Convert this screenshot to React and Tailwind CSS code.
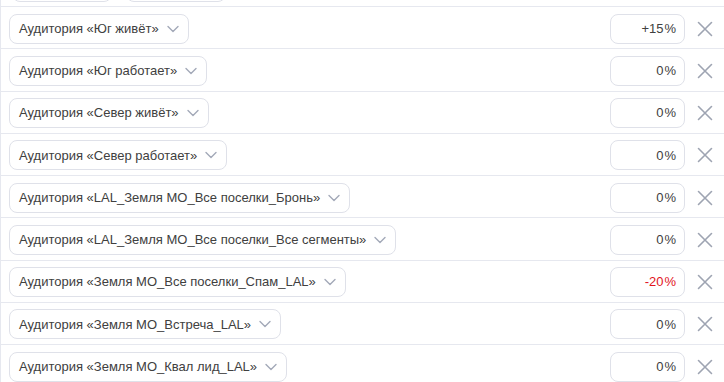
import React from 'react';

const ROWS = [
  { name: 'Аудитория «Юг живёт»', value: '+15' },
  { name: 'Аудитория «Юг работает»', value: '0' },
  { name: 'Аудитория «Север живёт»', value: '0' },
  { name: 'Аудитория «Север работает»', value: '0' },
  { name: 'Аудитория «LAL_Земля МО_Все поселки_Бронь»', value: '0' },
  { name: 'Аудитория «LAL_Земля МО_Все поселки_Все сегменты»', value: '0' },
  { name: 'Аудитория «Земля МО_Все поселки_Спам_LAL»', value: '-20', negative: true },
  { name: 'Аудитория «Земля МО_Встреча_LAL»', value: '0' },
  { name: 'Аудитория «Земля МО_Квал лид_LAL»', value: '0' },
];

function Chevron() {
  return (
    <svg width="14" height="14" viewBox="0 0 14 14" fill="none" className="shrink-0">
      <path d="M2 4.5 L7 9.5 L12 4.5" stroke="#a3a9b8" strokeWidth="1.4" strokeLinecap="round" strokeLinejoin="round" />
    </svg>
  );
}

function Cross() {
  return (
    <svg width="16" height="16" viewBox="0 0 16 16" fill="none">
      <path d="M1.5 1.5 L14.5 14.5 M14.5 1.5 L1.5 14.5" stroke="#9ea4b2" strokeWidth="1.6" strokeLinecap="round" />
    </svg>
  );
}

function Row({ row }) {
  return (
    <div className="flex items-start h-[42.25px] border-b border-[#e6e8ef] pl-[8px] pt-[6.5px]">
      <div className="flex items-center h-[30px] rounded-[8px] border border-[#dfe1e9] pl-[9px] pr-[8px] gap-[7px] text-[13px] text-[#404040] whitespace-nowrap">
        <span>{row.name}</span>
        <Chevron />
      </div>
      <div className="flex-1" />
      <div className={`flex items-center justify-end w-[75px] h-[30px] rounded-[8px] border border-[#dfe1e9] pr-[8px] text-[13px] ${row.negative ? 'text-[#e2141c]' : 'text-[#404040]'}`}>
        {row.value}<span className="ml-[1px]">%</span>
      </div>
      <div className="flex items-center justify-center w-[39px] h-[30px] pl-[1px]">
        <Cross />
      </div>
    </div>
  );
}

export default function App() {
  return (
    <div className="w-[724px] h-[382px] overflow-hidden bg-white border-l border-[#e6e8ef]" style={{ fontFamily: '"Liberation Sans", Arial, sans-serif' }}>
      {/* tail of the previous row */}
      <div className="relative h-[7px] border-b border-[#e6e8ef]">
        <div className="absolute left-[11px] top-[-28px] w-[100px] h-[30px] rounded-[8px] border border-[#dfe1e9]" />
        <div className="absolute left-[125px] top-[-28px] w-[100px] h-[30px] rounded-[8px] border border-[#dfe1e9]" />
      </div>
      {ROWS.map((r) => (
        <Row key={r.name} row={r} />
      ))}
    </div>
  );
}
